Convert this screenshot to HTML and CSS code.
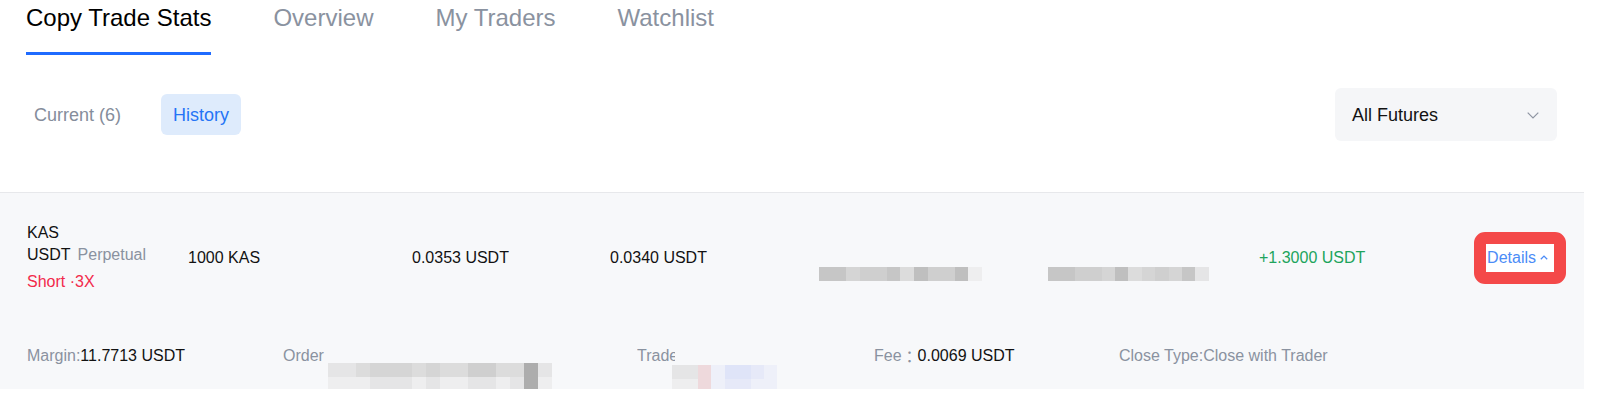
FILE: index.html
```html
<!DOCTYPE html>
<html lang="en">
<head>
    <meta charset="UTF-8">
    <title>Copy Trade Stats</title>
    <link rel="stylesheet" href="styles.css">
</head>
<body>
<div class="page">
    <div class="tabs">
        <div class="tab active">Copy Trade Stats</div>
        <div class="tab">Overview</div>
        <div class="tab">My Traders</div>
        <div class="tab">Watchlist</div>
    </div>

    <div class="toolbar">
        <div class="seg">
            <span class="seg-btn">Current (6)</span>
            <span class="seg-btn on">History</span>
        </div>
        <div class="select">
            <span>All Futures</span>
            <svg width="12" height="7" viewBox="0 0 12 7"><polyline points="0.7,0.7 6,6 11.3,0.7" fill="none" stroke="#8e95a2" stroke-width="1.2"/></svg>
        </div>
    </div>

    <div class="list">
        <div class="trade">
            <div class="trade-main">
                <div class="symbol">
                    <div>KAS</div>
                    <div>USDT<span class="tag">Perpetual</span></div>
                    <div class="side">Short ·3X</div>
                </div>
                <div>1000 KAS</div>
                <div>0.0353 USDT</div>
                <div>0.0340 USDT</div>
                <div class="mosaic w163">
                    <span class="g2"></span><span class="g2"></span><span class="g4"></span><span class="g3"></span>
                    <span class="g3"></span><span class="g2"></span><span class="g5"></span><span class="g1"></span>
                    <span class="g3"></span><span class="g3"></span><span class="g1"></span><span class="g7"></span>
                </div>
                <div class="mosaic w161">
                    <span class="g2"></span><span class="g2"></span><span class="g3"></span><span class="g3"></span>
                    <span class="g4"></span><span class="g1"></span><span class="g5"></span><span class="g4"></span>
                    <span class="g3"></span><span class="g4"></span><span class="g2"></span><span class="g6"></span>
                </div>
                <div class="profit">+1.3000 USDT</div>
                <div>
                    <a class="details">Details<svg width="8" height="5" viewBox="0 0 8 5"><polyline points="0.8,4.3 4,1.1 7.2,4.3" fill="none" stroke="#4b8cf7" stroke-width="1.3"/></svg></a>
                </div>
            </div>

            <div class="trade-extra">
                <div class="extra-item">Margin:<span class="val">11.7713 USDT</span></div>
                <div class="extra-item">Order
                    <div class="mosaic tall order">
                        <span class="g6"></span><span class="g6"></span><span class="g5"></span><span class="g4"></span>
                        <span class="g4"></span><span class="g4"></span><span class="g5"></span><span class="g4"></span>
                        <span class="g5"></span><span class="g5"></span><span class="g3"></span><span class="g3"></span>
                        <span class="g5"></span><span class="g5"></span><span class="g0"></span><span class="g6"></span>
                        <span class="g7"></span><span class="g7"></span><span class="g7"></span><span class="g6"></span>
                        <span class="g6"></span><span class="g6"></span><span class="g7"></span><span class="g6"></span>
                        <span class="g7"></span><span class="g7"></span><span class="g6"></span><span class="g6"></span>
                        <span class="g7"></span><span class="g6"></span><span class="g0"></span><span class="g7"></span>
                    </div>
                </div>
                <div class="extra-item"><span class="cut">Trade</span>
                    <div class="mosaic tall trader">
                        <span class="g6"></span><span class="g6"></span><span class="pk"></span><span class="bl3"></span>
                        <span class="bl"></span><span class="bl"></span><span class="bl2"></span><span class="bl3"></span>
                        <span class="g7"></span><span class="g7"></span><span class="pk"></span><span class="bl3"></span>
                        <span class="bl2"></span><span class="bl2"></span><span class="bl3"></span><span class="bl3"></span>
                    </div>
                </div>
                <div class="extra-item">Fee<span class="colon">：</span><span class="val">0.0069 USDT</span></div>
                <div class="extra-item">Close Type:Close with Trader</div>
            </div>
        </div>
    </div>
</div>
</body>
</html>
```

FILE: styles.css
```css
* {
    margin: 0;
    padding: 0;
    box-sizing: border-box;
}

body {
    font-family: "Liberation Sans", Arial, "Noto Sans CJK SC", sans-serif;
    color: #121212;
    background: #fff;
}

.page {
    width: 1584px;
}

/* top tabs */
.tabs {
    display: flex;
    gap: 62px;
    padding: 2px 0 0 26px;
}

.tab {
    font-size: 24px;
    line-height: 32px;
    padding-bottom: 18px;
    border-bottom: 3px solid transparent;
    color: #8a92a0;
}

.tab.active {
    color: #000;
    border-bottom-color: #1f6bff;
}

/* current / history + filter */
.toolbar {
    display: flex;
    align-items: center;
    justify-content: space-between;
    height: 53px;
    margin-top: 33px;
    padding: 0 27px 0 22px;
}

.seg {
    display: flex;
    gap: 28px;
}

.seg-btn {
    font-size: 18px;
    height: 41px;
    line-height: 42px;
    padding: 0 12px;
    border-radius: 6px;
    color: #858d9b;
}

.seg-btn.on {
    background: #deebfc;
    color: #2574f6;
}

.select {
    width: 222px;
    height: 53px;
    display: flex;
    align-items: center;
    justify-content: space-between;
    padding: 1px 18px 0 17px;
    background: #f5f6f8;
    border-radius: 6px;
    font-size: 18px;
    color: #121212;
}

/* history list */
.list {
    margin-top: 51px;
    border-top: 1px solid #e7e8eb;
    background: #f7f8fa;
}

.trade-main {
    display: grid;
    grid-template-columns: 161px 224px 198px 209px 229px 211px 1fr auto;
    align-items: center;
    padding: 29px 18px 29px 27px;
    font-size: 16px;
    line-height: 22px;
}

.tag {
    margin-left: 7px;
    color: #8a92a0;
}

.side {
    margin-top: 5px;
    color: #f22a4b;
}

.profit {
    color: #20a45c;
}

.details {
    display: flex;
    align-items: center;
    gap: 4px;
    height: 52px;
    padding: 0 6px 0 1px;
    background: #fff;
    border: 12px solid #f44949;
    border-radius: 11px;
    color: #4b8cf7;
    font-size: 16px;
    line-height: 28px;
    cursor: pointer;
}

/* pixelated (hidden) values */
.mosaic {
    display: flex;
    flex-wrap: wrap;
    height: 14px;
    margin-top: 32px;
}

.mosaic span {
    flex: 1 0 auto;
    height: 14px;
}

.w163 { width: 163px; }
.w161 { width: 161px; }

.mosaic.w163 span,
.mosaic.w161 span {
    width: 8.33%;
    flex: none;
}

.mosaic.tall {
    height: 28px;
    margin-top: 18px;
    flex: none;
}

.mosaic.order {
    width: 224px;
    margin-left: 4px;
}

.mosaic.order span {
    width: 14px;
    flex: none;
}

.mosaic.trader {
    width: 105px;
    margin-top: 20px;
    margin-left: -3px;
}

.mosaic.trader span {
    width: 13.125px;
    flex: none;
}

.g0 { background: #adadad; }
.g1 { background: #bfbfbf; }
.g2 { background: #c6c6c6; }
.g3 { background: #cfcfcf; }
.g4 { background: #d5d5d5; }
.g5 { background: #dcdcdc; }
.g6 { background: #e5e5e6; }
.g7 { background: #eeeeef; }
.pk { background: #eed9dc; }
.bl { background: #dfe4f8; }
.bl2 { background: #e6e9f8; }
.bl3 { background: #eef0f9; }

/* expanded info */
.trade-extra {
    display: grid;
    grid-template-columns: 256px 354px 237px 245px auto;
    padding: 23px 0 22px 27px;
    font-size: 16px;
    line-height: 22px;
    color: #8a92a0;
}

.extra-item {
    display: flex;
    height: 22px;
    white-space: nowrap;
}

.colon {
    font-family: "Noto Sans CJK JP", sans-serif;
    line-height: 22px;
}

.val {
    color: #121212;
}

.cut {
    display: inline-block;
    width: 38px;
    overflow: hidden;
}
```
